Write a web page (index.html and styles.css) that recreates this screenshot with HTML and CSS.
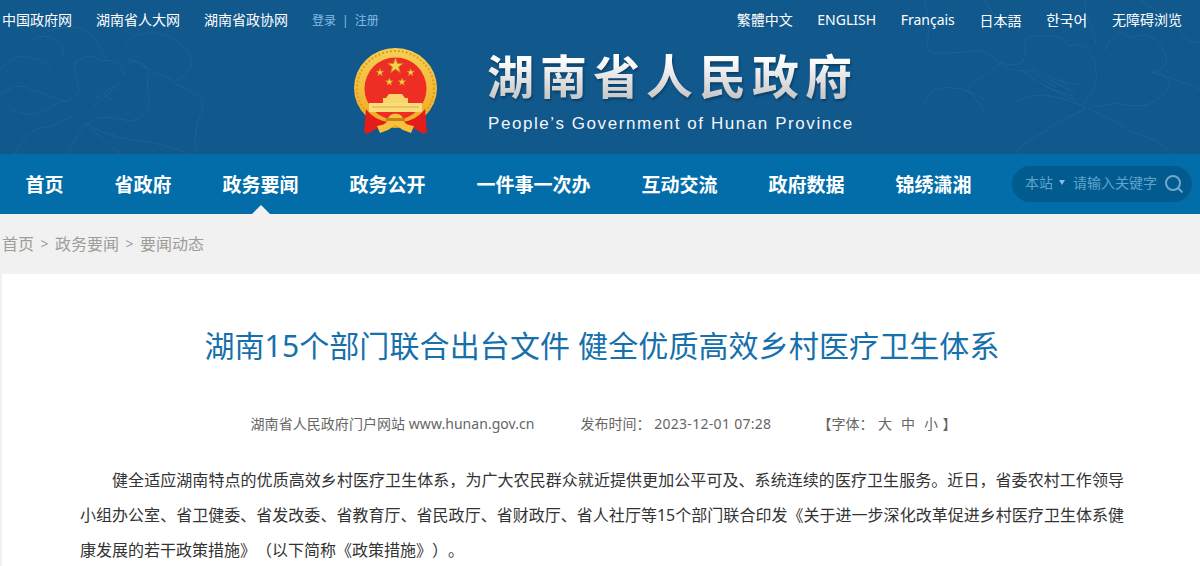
FILE: index.html
```html
<!DOCTYPE html>
<html lang="zh-CN">
<head>
    <meta charset="UTF-8">
    <meta name="viewport" content="width=device-width, initial-scale=1.0">
    <title>湖南省人民政府</title>
    <link rel="stylesheet" href="styles.css">
</head>
<body>
    <header class="header">
        <!-- peony line art behind the banner -->
        <svg class="peony" width="1200" height="154" viewBox="0 0 1200 154" fill="none">
            <g class="peony-line">
                <path d="M0 70C8 62 14 54 28 57C38 58 48 66 52 68M32 40C38 34 50 37 55 39C63 43 65 51 62 57M42 34C60 26 72 27 80 28C92 34 102 44 107 62"/>
                <path d="M125 46C130 34 145 30 165 35C180 40 190 52 192 62C188 72 185 76 175 81C150 72 135 60 128 58"/>
                <path d="M175 84C190 90 202 96 203 106C200 118 192 128 197 150M128 62C140 58 150 66 148 78C146 86 150 100 148 108C142 118 135 122 125 120C112 118 100 114 90 122C75 134 70 150 68 154"/>
                <path d="M75 62C85 55 96 54 100 62C112 58 122 62 124 76M75 62C72 72 80 84 78 92C74 102 60 100 50 108C40 114 28 118 10 108M0 95C10 88 22 82 30 90C44 92 56 100 70 102"/>
                <path d="M85 122C95 130 115 138 135 140C150 142 170 146 190 154M95 100C104 92 112 88 118 84M92 108C100 100 108 94 116 88M104 92C106 98 110 100 116 98M98 98C96 92 100 86 104 90"/>
                <path d="M15 154C22 140 30 130 42 128C52 126 62 122 72 116M120 154C110 146 100 136 85 124"/>
            </g>
            <g class="peony-line">
                <path d="M925 0C925 12 930 20 928 28C930 38 924 44 930 52C950 56 975 48 985 52C995 60 1010 70 1022 62C1030 52 1018 42 1032 36"/>
                <path d="M1032 36C1045 38 1060 30 1068 46C1085 40 1098 55 1096 80C1094 92 1085 100 1082 106M985 0C990 10 998 20 1010 28M1086 0C1080 10 1096 30 1096 46"/>
                <path d="M1105 50C1112 34 1122 28 1130 38C1150 30 1160 42 1164 52C1172 62 1160 72 1153 72C1170 76 1178 86 1156 100C1150 106 1135 108 1118 103C1105 104 1098 108 1092 106"/>
                <path d="M1000 62C1005 72 1030 72 1040 70C1050 78 1062 84 1080 84M925 105C925 92 940 86 952 88C962 88 972 92 985 100M1000 62C994 72 966 84 968 92C980 100 978 108 988 114"/>
                <path d="M1023 70C1030 78 1054 92 1076 100M1033 68C1038 78 1046 82 1056 88M1042 76C1050 80 1060 86 1070 90M1046 86C1056 92 1064 92 1072 96M1060 78C1066 84 1068 90 1076 96"/>
                <path d="M1015 102C1025 96 1040 94 1050 96C1065 98 1078 104 1086 108C1074 116 1058 120 1048 130C1036 136 1020 144 1016 154M1088 108C1102 116 1120 122 1130 132C1146 136 1160 140 1172 154"/>
                <path d="M1150 72C1165 76 1190 84 1200 90M1180 30C1186 40 1192 44 1200 42M1140 0C1150 8 1170 14 1180 30"/>
            </g>
        </svg>

        <div class="topbar">
            <div class="top-links">
                <a href="#">中国政府网</a>
                <a href="#">湖南省人大网</a>
                <a href="#">湖南省政协网</a>
                <span class="login"><a href="#">登录</a><i>|</i><a href="#">注册</a></span>
            </div>
            <div class="top-links top-links-lang">
                <a href="#">繁體中文</a>
                <a href="#">ENGLISH</a>
                <a href="#">Français</a>
                <a href="#" lang="ja">日本語</a>
                <a href="#" lang="ko">한국어</a>
                <a href="#">无障碍浏览</a>
            </div>
        </div>

        <div class="brand">
            <!-- national emblem -->
            <svg class="emblem" width="110" height="110" viewBox="0 0 110 110">
                <defs>
                    <path id="star" d="M0-10 2.35-3.24 9.51-3.09 3.8 1.24 5.88 8.09 0 4-5.88 8.09-3.8 1.24-9.51-3.09-2.35-3.24Z"/>
                    <linearGradient id="ring" x1="0" y1="0" x2="0" y2="1">
                        <stop offset="0" stop-color="#f7cf55"/>
                        <stop offset="1" stop-color="#eeaa1f"/>
                    </linearGradient>
                </defs>
                <ellipse cx="55.5" cy="53" rx="41.5" ry="40" fill="url(#ring)"/>
                <ellipse cx="55.5" cy="53" rx="38.5" ry="37" fill="none" stroke="#dd9d20" stroke-width="2" stroke-dasharray="2 2"/>
                <circle cx="55.5" cy="53.5" r="31" fill="#ee2d24"/>
                <g fill="#f9cf4c" stroke="#c98a20" stroke-width="1.2">
                    <use href="#star" transform="translate(55.5 31) scale(.8)"/>
                    <use href="#star" transform="translate(40 37.5) scale(.4)"/>
                    <use href="#star" transform="translate(70.7 37.5) scale(.4)"/>
                    <use href="#star" transform="translate(49.3 47) scale(.4)"/>
                    <use href="#star" transform="translate(62 47) scale(.4)"/>
                </g>
                <path d="M43 63h3l3-4h13l3 4h3v5H43Z" fill="#f9d66b"/>
                <rect x="29" y="68" width="53" height="9" fill="#fbdc7c"/>
                <path d="M32 72h47" stroke="#e2a93a" stroke-width="1"/>
                <path d="M26 74C32 82 40 86 49 87L46 94 38 93 27 99 24 97Z" fill="#e31e1a"/>
                <path d="M85 74C79 82 71 86 62 87L65 94 73 93 84 99 87 97Z" fill="#e31e1a"/>
                <path d="M37 91C44 90 47 88 48 84C49 77 62 77 63 84C64 88 67 90 74 91L71 98 63 95 55.5 90 48 95 40 98Z" fill="#f6c23b"/>
                <path d="M46 83h19v3H46Z" fill="#c8801c"/>
            </svg>
            <div class="brand-text">
                <h1 class="site-name">湖南省人民政府</h1>
                <p class="site-en">People’s Government of Hunan Province</p>
            </div>
        </div>
    </header>

    <nav class="nav">
        <ul class="nav-list">
            <li><a href="#">首页</a></li>
            <li><a href="#">省政府</a></li>
            <li class="active"><a href="#">政务要闻</a></li>
            <li><a href="#">政务公开</a></li>
            <li><a href="#">一件事一次办</a></li>
            <li><a href="#">互动交流</a></li>
            <li><a href="#">政府数据</a></li>
            <li><a href="#">锦绣潇湘</a></li>
        </ul>
        <div class="search">
            <span class="scope">本站</span>
            <span class="caret"></span>
            <span class="placeholder">请输入关键字</span>
            <svg class="search-icon" width="20" height="20" viewBox="0 0 20 20" fill="none" stroke="#6fa9cc" stroke-width="2">
                <circle cx="9" cy="9" r="7"/>
                <path d="M14 14 18.5 18.5"/>
            </svg>
        </div>
    </nav>

    <div class="crumbs">
        <a href="#">首页</a><span>&gt;</span><a href="#">政务要闻</a><span>&gt;</span><a href="#">要闻动态</a>
    </div>

    <main class="article">
        <h2 class="article-title">湖南15个部门联合出台文件 健全优质高效乡村医疗卫生体系</h2>
        <div class="meta">
            <span class="source">湖南省人民政府门户网站 www.hunan.gov.cn</span>
            <span>发布时间： <em class="date">2023-12-01 07:28</em></span>
            <span class="font-size">【字体：<b>大</b><b>中</b><b>小</b>】</span>
        </div>
        <div class="article-body">
            <p>健全适应湖南特点的优质高效乡村医疗卫生体系，为广大农民群众就近提供更加公平可及、系统连续的医疗卫生服务。近日，省委农村工作领导小组办公室、省卫健委、省发改委、省教育厅、省民政厅、省财政厅、省人社厅等15个部门联合印发《关于进一步深化改革促进乡村医疗卫生体系健康发展的若干政策措施》（以下简称《政策措施》）。</p>
        </div>
    </main>
</body>
</html>
```

FILE: styles.css
```css
* {
    margin: 0;
    padding: 0;
    box-sizing: border-box;
}

body {
    font-family: "Noto Sans", "Noto Sans CJK SC", sans-serif;
    background: #f1f1f1;
    color: #333;
    text-spacing-trim: space-all;
}

a {
    color: inherit;
    text-decoration: none;
}

.header {
    position: relative;
    height: 154px;
    background: #11588d;
    overflow: hidden;
}

.peony {
    position: absolute;
    left: 0;
    top: 0;
}

.peony-line {
    stroke: #246498;
    stroke-width: 1;
    stroke-dasharray: 2 1;
}

.topbar {
    position: relative;
    display: flex;
    justify-content: space-between;
    height: 40px;
    padding: 0 18px 0 2px;
    color: #fff;
    font-size: 14px;
    line-height: 40px;
}

.top-links {
    display: flex;
    gap: 24px;
}

.top-links-lang {
    gap: 24.6px;
}

.top-links [lang="ja"] {
    font-family: "Noto Sans CJK JP", sans-serif;
}

.top-links [lang="ko"] {
    font-family: "Noto Sans CJK KR", sans-serif;
    font-size: 15px;
}

.login {
    color: #85bbe3;
    font-size: 12px;
    line-height: 41px;
}

.login i {
    margin: 0 6px;
    font-style: normal;
}

.brand {
    position: relative;
    display: flex;
    padding-left: 340px;
    margin-top: -5px;
}

.brand-text {
    margin-left: 37px;
    padding-top: 7px;
}

.site-name {
    width: 372px;
    font-size: 47px;
    line-height: 68px;
    font-weight: 700;
    letter-spacing: 6px;
    white-space: nowrap;
    background: linear-gradient(180deg, #fff 25%, #c9c9c9 80%);
    -webkit-background-clip: text;
    background-clip: text;
    -webkit-text-fill-color: transparent;
    filter: drop-shadow(1px 2px 1px rgba(0, 0, 0, 0.3));
}

.site-en {
    margin: 2px 0 0 1px;
    font-family: "Liberation Sans", sans-serif;
    font-size: 17px;
    line-height: 24px;
    letter-spacing: 1.57px;
    color: #f2f6f9;
    white-space: nowrap;
}

.nav {
    display: flex;
    justify-content: space-between;
    align-items: center;
    height: 60px;
    padding-right: 8px;
    background: #026da9;
}

.nav-list {
    display: flex;
    list-style: none;
}

.nav-list li {
    position: relative;
    padding: 0 25.5px;
    color: #fff;
    font-size: 19px;
    font-weight: 700;
    line-height: 62px;
    height: 60px;
}

.nav-list .active::after {
    content: "";
    position: absolute;
    left: 50%;
    bottom: 0;
    margin-left: -9px;
    border: 9px solid transparent;
    border-top: 0;
    border-bottom-color: #f1f1f1;
}

.search {
    display: flex;
    align-items: center;
    width: 180px;
    height: 36px;
    padding: 0 8px 4px 13px;
    border-radius: 18px;
    background: #025b8f;
    color: #5fa3cb;
    font-size: 14px;
}

.search-icon {
    margin-top: 4px;
}

.caret {
    margin: 0 8px 0 6px;
    border: 3.5px solid transparent;
    border-top: 5px solid #8fbcd8;
    border-bottom: 0;
}

.placeholder {
    flex: 1;
    white-space: nowrap;
}

.crumbs {
    display: flex;
    align-items: center;
    height: 60px;
    padding: 0 0 2px 2px;
    color: #a09c98;
    font-size: 16px;
}

.crumbs span {
    margin: 0 6.5px;
    font-size: 14px;
}

.article {
    margin-left: 2px;
    padding: 0 76px 0 78px;
    background: #fff;
}

.article-title {
    padding-top: 50px;
    color: #1670ab;
    font-size: 30px;
    font-weight: 400;
    letter-spacing: 0.11px;
    line-height: 44px;
    text-align: center;
    white-space: nowrap;
}

.meta {
    display: flex;
    justify-content: center;
    gap: 46px;
    margin-top: 46px;
    padding-left: 3px;
    color: #666;
    font-size: 14px;
    line-height: 20px;
}

.source {
    letter-spacing: 0.05px;
}

.date {
    font-style: normal;
    letter-spacing: 0.3px;
}

.font-size b {
    margin: 0 4.5px;
    font-weight: 400;
}

.article-body {
    margin-top: 29px;
    color: #333;
    font-size: 16px;
    line-height: 35px;
    text-align: justify;
}

.article-body p {
    text-indent: 2em;
}
```
